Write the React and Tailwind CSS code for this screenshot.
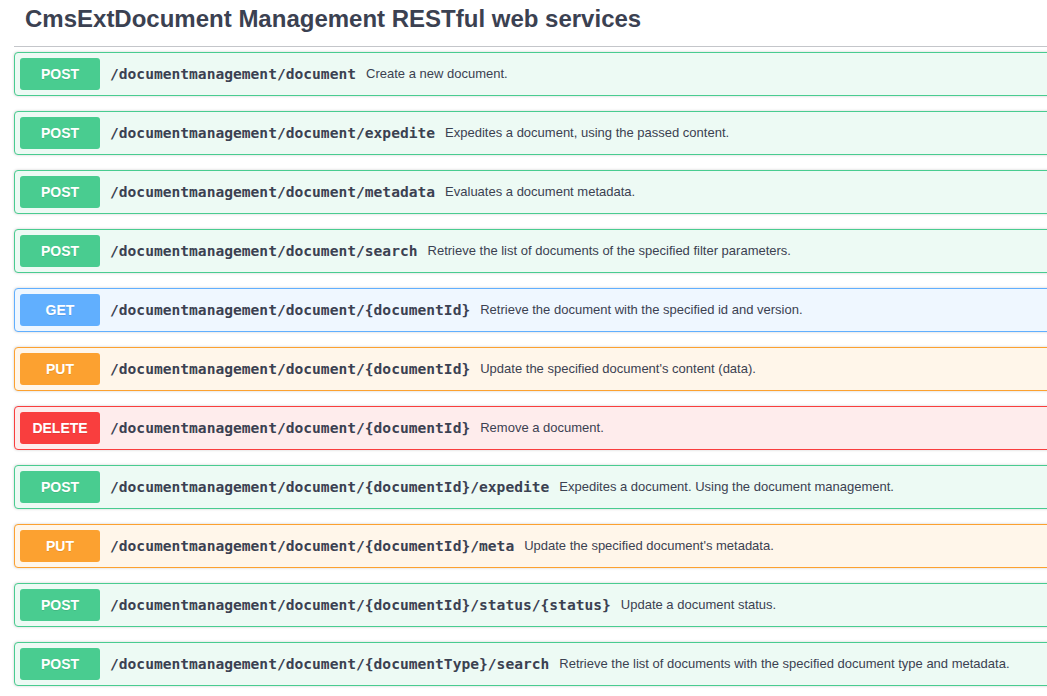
import React from 'react';

const ops = [
  { method: 'POST', path: '/documentmanagement/document', summary: 'Create a new document.' },
  { method: 'POST', path: '/documentmanagement/document/expedite', summary: 'Expedites a document, using the passed content.' },
  { method: 'POST', path: '/documentmanagement/document/metadata', summary: 'Evaluates a document metadata.' },
  { method: 'POST', path: '/documentmanagement/document/search', summary: 'Retrieve the list of documents of the specified filter parameters.' },
  { method: 'GET', path: '/documentmanagement/document/{documentId}', summary: 'Retrieve the document with the specified id and version.' },
  { method: 'PUT', path: '/documentmanagement/document/{documentId}', summary: "Update the specified document's content (data)." },
  { method: 'DELETE', path: '/documentmanagement/document/{documentId}', summary: 'Remove a document.' },
  { method: 'POST', path: '/documentmanagement/document/{documentId}/expedite', summary: 'Expedites a document. Using the document management.' },
  { method: 'PUT', path: '/documentmanagement/document/{documentId}/meta', summary: "Update the specified document's metadata." },
  { method: 'POST', path: '/documentmanagement/document/{documentId}/status/{status}', summary: 'Update a document status.' },
  { method: 'POST', path: '/documentmanagement/document/{documentType}/search', summary: 'Retrieve the list of documents with the specified document type and metadata.' },
];

const styles = {
  POST: { box: 'border-[#49cc90] bg-[#edfaf4]', badge: 'bg-[#49cc90]' },
  GET: { box: 'border-[#61affe] bg-[#eff7ff]', badge: 'bg-[#61affe]' },
  PUT: { box: 'border-[#fca130] bg-[#fff6ea]', badge: 'bg-[#fca130]' },
  DELETE: { box: 'border-[#f93e3e] bg-[#feecec]', badge: 'bg-[#f93e3e]' },
};

function OpBlock({ method, path, summary }) {
  const s = styles[method];
  return (
    <div className={`mb-[15px] rounded border shadow-[0_0_3px_rgba(0,0,0,0.19)] ${s.box}`}>
      <div className="flex items-center p-[5px]">
        <span
          className={`${s.badge} min-w-[80px] h-[32px] rounded-[3px] flex items-center justify-center text-white text-[14px] font-bold [text-shadow:0_1px_0_rgba(0,0,0,0.1)]`}
          style={{ fontFamily: '"Liberation Sans", Arial, sans-serif' }}
        >
          {method}
        </span>
        <span
          className="px-[10px] text-[14.6px] font-bold text-[#3b4151] whitespace-nowrap"
          style={{ fontFamily: '"DejaVu Sans Mono", monospace' }}
        >
          {path}
        </span>
        <span
          className="text-[13px] text-[#3b4151] whitespace-nowrap"
          style={{ fontFamily: '"Liberation Sans", Arial, sans-serif' }}
        >
          {summary}
        </span>
      </div>
    </div>
  );
}

export default function App() {
  return (
    <div className="w-[1047px] h-[696px] overflow-hidden bg-white">
      <div className="w-[1060px] pl-[14px]">
        {/* tag header */}
        <div className="border-b border-[rgba(59,65,81,0.3)] mb-[5px] h-[47px] pt-[7px] pl-[11px]">
          <h4
            className="text-[24px] font-bold text-[#3b4151] leading-none"
            style={{ fontFamily: '"Liberation Sans", Arial, sans-serif' }}
          >
            CmsExtDocument Management RESTful web services
          </h4>
        </div>
        {ops.map((op, i) => (
          <OpBlock key={i} {...op} />
        ))}
      </div>
    </div>
  );
}
